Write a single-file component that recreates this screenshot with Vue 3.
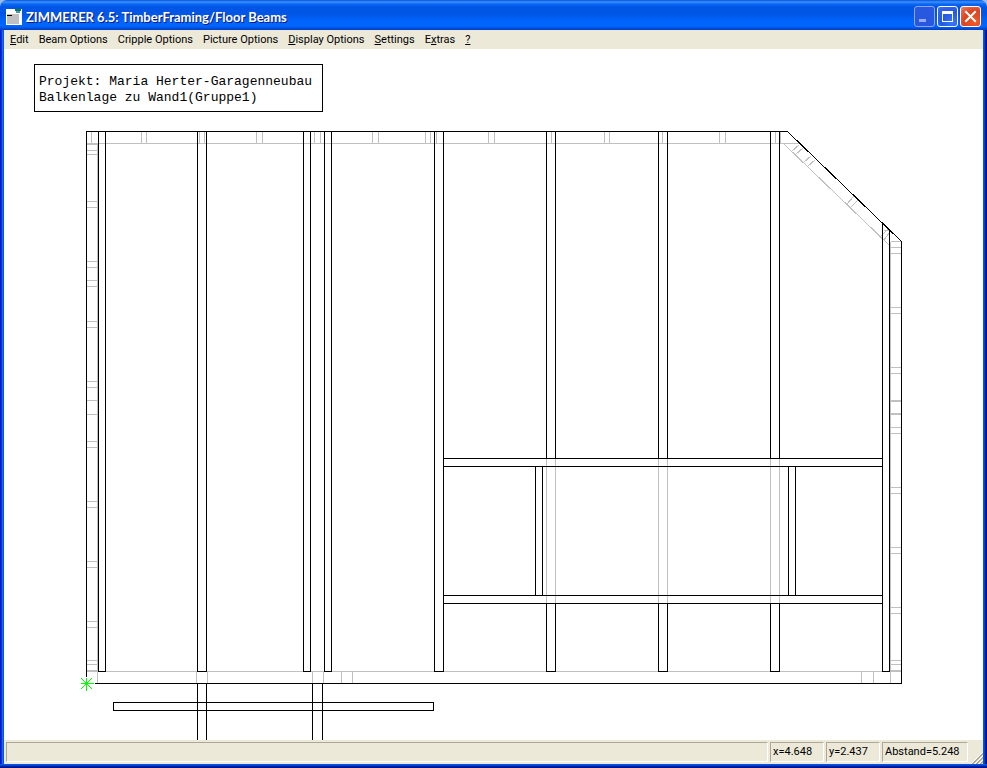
<script setup>
import { ref } from 'vue'

const menus = [
  { before: '', key: 'E', after: 'dit' },
  { before: 'Beam Options', key: '', after: '' },
  { before: 'Cripple Options', key: '', after: '' },
  { before: 'Picture Options', key: '', after: '' },
  { before: '', key: 'D', after: 'isplay Options' },
  { before: '', key: 'S', after: 'ettings' },
  { before: 'E', key: 'x', after: 'tras' },
  { before: '', key: '?', after: '' }
]

const status = ref({ x: '4.648', y: '2.437', distance: '5.248' })

// Each stud is a short tick across the wall plate it belongs to.
const across = (list, a, b) => list.map((x) => `M${x} ${a}V${b}`).join('')
const down = (list, a, b) => list.map((y) => `M${a} ${y}H${b}`).join('')

const plates = 'M86 143H799M97 143V683M890 241V683M86 671H901'
const topStuds = across([91, 141, 146, 199, 204, 256, 262, 314, 320, 372, 378, 425, 430, 436, 488, 494, 551, 604, 609, 662, 719, 725, 775, 780], 131, 143)
const leftStuds = down([144, 150, 154, 201, 207, 261, 267, 280, 286, 321, 327, 381, 387, 400, 414, 441, 447, 501, 507, 561, 567, 621, 627, 660, 664, 670], 86, 97)
const rightStuds = down([241, 247, 253, 307, 313, 367, 373, 400, 401, 413, 414, 427, 433, 487, 493, 547, 553, 607, 613, 660, 664, 670], 890, 901)
const bottomStuds = across([196, 207, 312, 323, 341, 352, 861, 873], 671, 683)
const removed = across([546, 555, 658, 667, 770, 779], 458, 603)
const slopePlate = 'M784 144L889 245'
const slopeStuds = 'M799 144L791 151M803 147L795 154M811 155L803 162M815 159L807 166M853 196L846 204M857 200L850 207M887 229L880 236M889 232L883 240M883 230H889'
const hidden = [plates, topStuds, leftStuds, rightStuds, bottomStuds, removed, slopePlate, slopeStuds]

const outline = 'M86 676V131H787L901 241V683H94'
const longBeams = [[98, 105], [197, 206], [303, 310], [324, 331], [434, 443]]
  .map(([a, b]) => `M${a} 131V671H${b}V131`).join('')
const cutBeams = [[546, 555], [658, 667], [770, 779]]
  .map(([a, b]) => `M${a} 131V458M${b} 131V458M${a} 603V671H${b}V603`).join('')
const edgeBeam = 'M882 223V671H889V230'
const trimmers = 'M443 458H882M443 466H882M443 595H882M443 603H882M535 466V595M542 466V595M788 466V595M795 466V595'
const lower = 'M197 683V740M206 683V740M312 683V740M322 683V740M113 702H433V710H113Z'
const visible = [outline, longBeams, cutBeams, edgeBeam, trimmers, lower]
</script>

<template>
  <div class="window">
    <header class="titlebar">
      <svg class="appicon" viewBox="0 0 16 16" aria-hidden="true">
        <rect width="16" height="16" fill="#fff" />
        <rect x="1" y="5" width="12" height="10" fill="#c0c0c0" />
        <rect x="1" y="6" width="5" height="1" fill="#000" />
        <rect x="9" y="0" width="6" height="2" fill="#008040" />
        <rect x="10" y="2" width="4" height="2" fill="#4a90c0" />
      </svg>
      <h1 class="title">ZIMMERER 6.5: TimberFraming/Floor Beams</h1>
      <div class="controls">
        <button class="control minimize" type="button" aria-label="Minimize">
          <svg viewBox="0 0 19 19"><rect x="4" y="12" width="7" height="3" fill="#9aa9f0" /></svg>
        </button>
        <button class="control" type="button" aria-label="Maximize">
          <svg viewBox="0 0 19 19"><path d="M4 4H15V15H4ZM5 7V14H14V7Z" fill="#fff" fill-rule="evenodd" /></svg>
        </button>
        <button class="control close" type="button" aria-label="Close">
          <svg viewBox="0 0 19 19"><path d="M5 5L14 14M14 5L5 14" stroke="#fff" stroke-width="2" stroke-linecap="square" /></svg>
        </button>
      </div>
    </header>
    <div class="body">
      <nav class="menubar">
        <button v-for="(m, i) in menus" :key="i" class="menu" type="button">{{ m.before }}<u v-if="m.key">{{ m.key }}</u>{{ m.after }}</button>
      </nav>
      <main class="canvas">
        <svg class="plan" viewBox="4 49 979 691" role="img" aria-label="Floor beams">
          <g class="lines" transform="translate(0.5 0.5)">
            <path v-for="(d, i) in hidden" :key="'h' + i" class="hidden" :d="d" />
            <path v-for="(d, i) in visible" :key="'v' + i" class="visible" :d="d" />
            <rect class="visible" x="34" y="64" width="288" height="47" />
            <path class="origin" d="M80 683H93M86 677V690M81 678L92 689M91 678L80 689M85 682H87V684H85Z" />
          </g>
          <text class="note" x="39" y="85">Projekt: Maria Herter-Garagenneubau</text>
          <text class="note" x="39" y="101">Balkenlage zu Wand1(Gruppe1)</text>
        </svg>
      </main>
      <footer class="statusbar">
        <span class="cell message"></span>
        <span class="cell coordinate">x={{ status.x }}</span>
        <span class="cell coordinate">y={{ status.y }}</span>
        <span class="cell distance">Abstand={{ status.distance }}</span>
        <svg class="grip" viewBox="0 0 13 13" aria-hidden="true">
          <path d="M1 13L13 1M5 13L13 5M9 13L13 9" stroke="#fff" />
          <path d="M2 13L13 2M3 13L13 3M6 13L13 6M7 13L13 7M10 13L13 10M11 13L13 11" stroke="#aca899" />
        </svg>
      </footer>
    </div>
  </div>
</template>

<style>
body {
  margin: 0;
  background: #9db9e8;
}
</style>

<style scoped>
.window {
  display: flex;
  flex-direction: column;
  box-sizing: border-box;
  min-height: 100vh;
  overflow: hidden;
  border-radius: 7px 7px 0 0;
  font-family: Roboto, "Liberation Sans", sans-serif;
  font-size: 11px;
  color: #000;
}
.titlebar {
  display: flex;
  align-items: center;
  box-sizing: border-box;
  height: 30px;
  padding: 3px 6px 0;
  background: linear-gradient(#0850d8 0, #3a92ff 2px, #0a68f4 4px, #0055e4 7px, #0056e6 14px, #0062fa 20px, #0066ff 26px, #0054e0 28px, #003cc0 30px);
}
.appicon {
  width: 16px;
  height: 16px;
  margin-right: 4px;
}
.title {
  flex: 1;
  margin: 0;
  font-family: Lato, "Liberation Sans", sans-serif;
  font-size: 13px;
  line-height: 18px;
  font-weight: 700;
  color: #fff;
  text-shadow: 1px 1px 0 #0a1883;
  white-space: nowrap;
}
.controls {
  display: flex;
  gap: 2px;
}
.control {
  box-sizing: border-box;
  width: 21px;
  height: 21px;
  padding: 0;
  border: 1px solid #fff;
  border-radius: 3px;
  background: radial-gradient(circle at 75% 80%, #3a78f8, #2358e4 50%, #3f6de8);
}
.control svg {
  display: block;
  width: 19px;
  height: 19px;
}
.minimize {
  border-color: #8ea4f0;
  background: #2858e0;
}
.close {
  background: radial-gradient(circle at 75% 80%, #f05a28, #dc4420 55%, #e88068);
}
.body {
  display: flex;
  flex: 1;
  flex-direction: column;
  padding: 0 4px 4px;
  background:
    linear-gradient(to top, #00138c 1px, #001ea0 1px 2px, #0441d8 2px 3px, #0855dd 3px) bottom / 100% 4px no-repeat,
    linear-gradient(to right, #0019cf 1px, #0831d9 1px 2px, #166aee 2px 3px, #0855dd 3px) left / 4px 100% no-repeat,
    linear-gradient(to left, #00138c 1px, #001ea0 1px 2px, #0441d8 2px 3px, #0855dd 3px) right / 4px 100% no-repeat;
}
.menubar {
  display: flex;
  align-items: center;
  height: 19px;
  padding-left: 1px;
  background: #ece9d8;
}
.menu {
  padding: 0 5px;
  border: 0;
  background: none;
  font: inherit;
  line-height: 17px;
  color: inherit;
  white-space: nowrap;
}
.canvas {
  flex: 1;
  background: #fff;
}
.plan {
  display: block;
  width: 100%;
  height: auto;
}
.lines {
  fill: none;
  stroke-width: 1;
  shape-rendering: crispEdges;
}
.hidden {
  stroke: #c0c0c0;
}
.visible {
  stroke: #000;
}
.origin {
  stroke: #00ff00;
}
.note {
  font-family: "Liberation Mono", "Courier New", monospace;
  font-size: 13px;
}
.statusbar {
  display: flex;
  align-items: center;
  gap: 2px;
  box-sizing: border-box;
  height: 24px;
  padding: 0 0 0 2px;
  background: #ece9d8;
}
.cell {
  box-sizing: border-box;
  height: 20px;
  padding: 0 2px;
  border: 1px solid;
  border-color: #aca899 #fff #fff #aca899;
  line-height: 18px;
  white-space: nowrap;
}
.message {
  flex: 1;
}
.coordinate {
  width: 54px;
}
.distance {
  width: 86px;
}
.grip {
  align-self: flex-end;
  width: 13px;
  height: 13px;
}
</style>
